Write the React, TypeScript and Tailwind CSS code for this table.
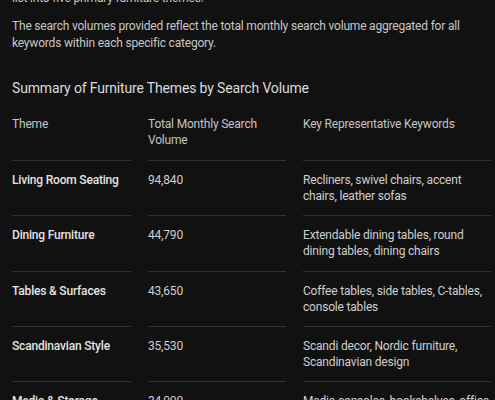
const rows = [
  { theme: 'Living Room Seating', volume: '94,840', keywords: 'Recliners, swivel chairs, accent chairs, leather sofas' },
  { theme: 'Dining Furniture', volume: '44,790', keywords: 'Extendable dining tables, round dining tables, dining chairs' },
  { theme: 'Tables & Surfaces', volume: '43,650', keywords: 'Coffee tables, side tables, C-tables, console tables' },
  { theme: 'Scandinavian Style', volume: '35,530', keywords: 'Scandi decor, Nordic furniture, Scandinavian design' },
  { theme: 'Media & Storage', volume: '34,000', keywords: 'Media consoles, bookshelves, office desks' },
]

export default function App() {
  return (
    <div className="h-[400px] w-[495px] overflow-hidden bg-[#111111] text-[12px] tracking-[-0.19px] text-[#c7c7c7] font-['Roboto',sans-serif]">
      <div className="-mt-[10px] px-3">
        <p className="leading-[17px]">list into five primary furniture themes.</p>
        <p className="mt-[11px] leading-[17px]">
          The search volumes provided reflect the total monthly search volume aggregated for all
          keywords within each specific category.
        </p>

        <h2 className="mt-[26px] text-[14px] leading-5 tracking-[-0.16px] text-[#dcdcdc]">
          Summary of Furniture Themes by Search Volume
        </h2>

        {/* Table */}
        <div className="mt-[8px] grid grid-cols-[119px_138px_188px] gap-x-[17px] leading-4">
          <div className="border-b border-[#333333] pt-[10px] pb-[12px] text-[#c4c4c4]">Theme</div>
          <div className="border-b border-[#333333] pt-[10px] pb-[12px] text-[#c4c4c4]">Total Monthly Search Volume</div>
          <div className="border-b border-[#333333] pt-[10px] pb-[12px] text-[#c4c4c4]">Key Representative Keywords</div>

          {rows.map((r) => (
            <div key={r.theme} className="contents">
              <div className="border-b border-[#333333] pt-[11px] pb-[11.25px] font-medium text-[#e3e3e3]">{r.theme}</div>
              <div className="border-b border-[#333333] pt-[11px] pb-[11.25px] text-[#cfcfcf]">{r.volume}</div>
              <div className="border-b border-[#333333] pt-[11px] pb-[11.25px] text-[#cfcfcf]">{r.keywords}</div>
            </div>
          ))}
        </div>
      </div>
    </div>
  )
}
